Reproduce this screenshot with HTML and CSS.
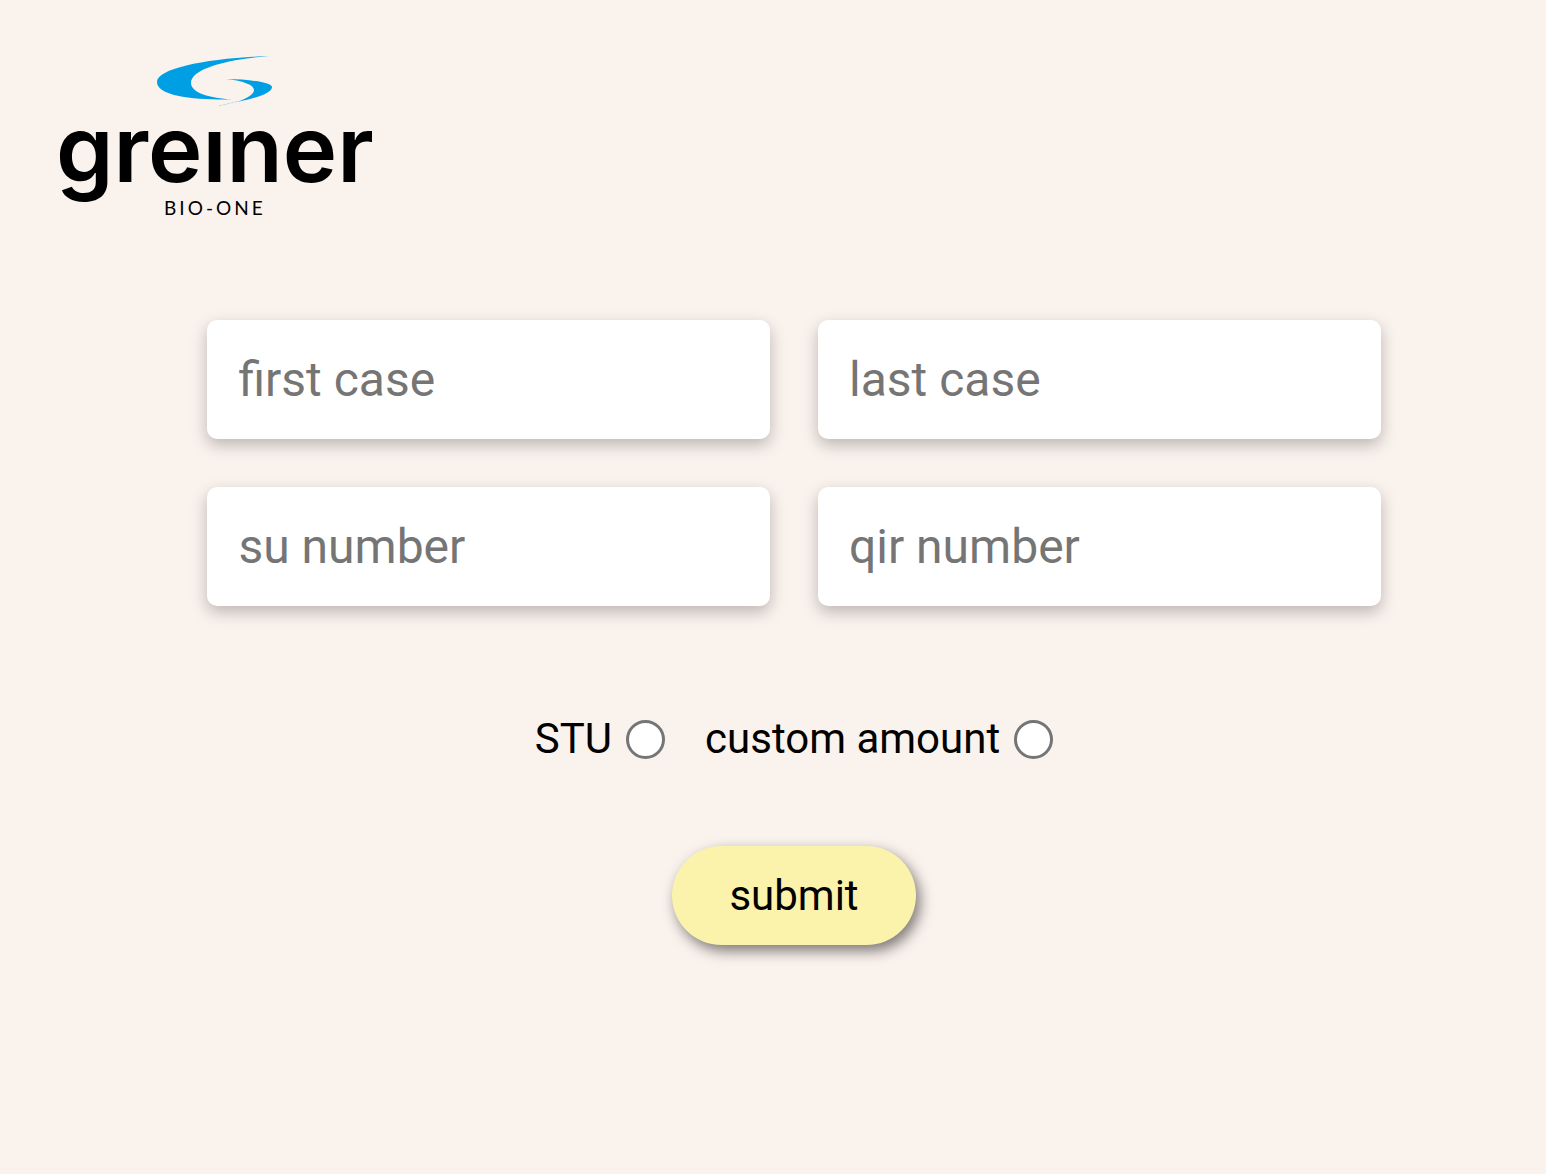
FILE: index.html
```html
<!DOCTYPE html>
<html lang="en">
<head>
  <meta charset="utf-8">
  <meta name="viewport" content="width=device-width, initial-scale=1">
  <title>Greiner Bio-One</title>
  <link rel="stylesheet" href="styles.css">
</head>
<body>
  <header class="header">
    <div class="logo">
      <svg class="logo-mark" viewBox="0 0 116 52" aria-hidden="true">
        <path fill="#009fe3" d="M112 0C53 2 0 12 0 26C0 40 36 44 75 43.500C53 42 34 37 34 27C34 14 65 4 112 0Z"/>
        <path fill="#009fe3" d="M69 23C93 23 115 27 115 31C115 37 100 42 80 46C91 42 97 38 97 34C97 29 87 25 69 23Z"/>
        <path fill="none" stroke="#009fe3" stroke-width=".5" stroke-dasharray="3 1" opacity=".55" d="M62 50L82 45"/>
      </svg>
      <span class="logo-name">greıner</span>
      <span class="logo-division">BIO-ONE</span>
    </div>
  </header>
  <main class="main">
    <form class="form">
      <div class="fields">
        <input class="field" type="text" name="first-case" placeholder="first case" aria-label="first case">
        <input class="field" type="text" name="last-case" placeholder="last case" aria-label="last case">
        <input class="field" type="text" name="su-number" placeholder="su number" aria-label="su number">
        <input class="field" type="text" name="qir-number" placeholder="qir number" aria-label="qir number">
      </div>
      <div class="options">
        <label class="option" for="stu">STU <input class="radio" type="radio" id="stu" name="amount" value="stu"></label>
        <label class="option" for="custom">custom amount <input class="radio" type="radio" id="custom" name="amount" value="custom"></label>
      </div>
      <button class="submit" type="submit">submit</button>
    </form>
  </main>
</body>
</html>
```

FILE: styles.css
```css
* {
  box-sizing: border-box;
}

body {
  margin: 0;
  min-height: 100vh;
  background: #faf2ed;
  color: #000;
  font-family: Roboto, "Liberation Sans", sans-serif;
}

.header {
  display: flex;
  padding: 56px 56px 0;
}

.logo {
  display: flex;
  flex-direction: column;
  align-items: center;
}

.logo-mark {
  width: 116px;
  height: 52px;
}

.logo-name {
  font-family: Inter, sans-serif;
  font-size: 92px;
  font-weight: 600;
  line-height: 82px;
}

.logo-division {
  margin-top: 8px;
  font-family: Lato, sans-serif;
  font-size: 19px;
  line-height: 20px;
  letter-spacing: 3px;
}

.main {
  padding: 102px 0 64px 42px;
}

.form {
  display: flex;
  flex-direction: column;
  align-items: center;
  width: 78%;
  margin: 0 auto;
}

.fields {
  display: grid;
  grid-template-columns: 1fr 1fr;
  gap: 48px;
  width: 100%;
}

.field {
  width: 100%;
  min-width: 0;
  height: 119px;
  padding: 0 31px;
  border: 0;
  border-radius: 10px;
  background: #fff;
  box-shadow: 0 6px 16px rgba(0, 0, 0, 0.25);
  font: inherit;
  font-size: 48px;
}

.field::placeholder {
  color: #757575;
  opacity: 1;
}

.options {
  display: flex;
  gap: 40px;
  margin-top: 108px;
}

.option {
  display: flex;
  align-items: center;
  gap: 14px;
  font-size: 42px;
  line-height: 50px;
}

.radio {
  appearance: none;
  width: 39px;
  height: 39px;
  margin: 0;
  border: 3px solid #757575;
  border-radius: 50%;
  background: #fff;
}

.radio:checked {
  background: radial-gradient(circle, #0075ff 55%, #fff 58%);
}

.submit {
  margin-top: 82px;
  padding: 24px 57px;
  border: 0;
  border-radius: 50px;
  background: #fbf2ab;
  box-shadow: 4px 6px 14px rgba(0, 0, 0, 0.5);
  color: #000;
  font: inherit;
  font-size: 42px;
  line-height: 51px;
}
```
